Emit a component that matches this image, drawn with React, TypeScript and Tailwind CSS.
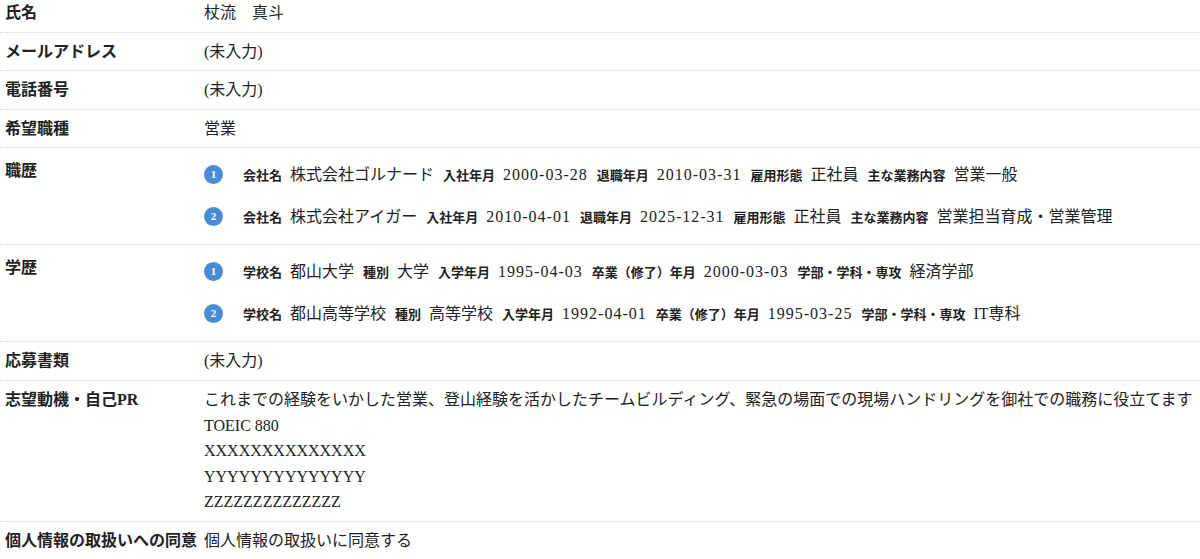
import React from "react";

type Field = { label: string; value: string };

const careers: Field[][] = [
  [
    { label: "会社名", value: "株式会社ゴルナード" },
    { label: "入社年月", value: "2000-03-28" },
    { label: "退職年月", value: "2010-03-31" },
    { label: "雇用形態", value: "正社員" },
    { label: "主な業務内容", value: "営業一般" },
  ],
  [
    { label: "会社名", value: "株式会社アイガー" },
    { label: "入社年月", value: "2010-04-01" },
    { label: "退職年月", value: "2025-12-31" },
    { label: "雇用形態", value: "正社員" },
    { label: "主な業務内容", value: "営業担当育成・営業管理" },
  ],
];

const schools: Field[][] = [
  [
    { label: "学校名", value: "都山大学" },
    { label: "種別", value: "大学" },
    { label: "入学年月", value: "1995-04-03" },
    { label: "卒業（修了）年月", value: "2000-03-03" },
    { label: "学部・学科・専攻", value: "経済学部" },
  ],
  [
    { label: "学校名", value: "都山高等学校" },
    { label: "種別", value: "高等学校" },
    { label: "入学年月", value: "1992-04-01" },
    { label: "卒業（修了）年月", value: "1995-03-25" },
    { label: "学部・学科・専攻", value: "IT専科" },
  ],
];

const isDate = (v: string) => /^\d{4}-\d{2}-\d{2}$/.test(v);

function Row({
  label,
  children,
  first,
  last,
}: {
  label: string;
  children: React.ReactNode;
  first?: boolean;
  last?: boolean;
}) {
  return (
    <div
      className={`grid grid-cols-[200px_1fr] ${
        last ? "" : "border-b border-dotted border-[#d4d4d4]"
      }`}
    >
      <div className={`pl-[5px] font-bold ${first ? "pb-[6px]" : "py-[6px]"}`}>
        {label}
      </div>
      <div className={`pl-1 ${first ? "pb-[6px]" : "py-[6px]"}`}>{children}</div>
    </div>
  );
}

function ListRow({ label, items }: { label: string; items: Field[][] }) {
  return (
    <div className="grid grid-cols-[200px_1fr] border-b border-dotted border-[#d4d4d4]">
      <div className="pl-[5px] pt-[10px] font-bold">{label}</div>
      <ol className="pl-1 pt-[5px] pb-[7px]">
        {items.map((fields, i) => (
          <li key={i} className="flex h-[42px] items-center">
            <span className="mr-[20px] flex h-[19px] w-[19px] shrink-0 items-center justify-center rounded-full bg-[#4a8bd6] text-[11px] font-bold leading-none text-white">
              {i + 1}
            </span>
            <span className="flex flex-wrap items-baseline gap-x-[9px]">
              {fields.map((f) => (
                <span key={f.label} className="flex items-baseline gap-x-[8px]">
                  <span className="text-[13px] font-bold">{f.label}</span>
                  <span className={isDate(f.value) ? "tracking-[1px]" : ""}>
                    {f.value}
                  </span>
                </span>
              ))}
            </span>
          </li>
        ))}
      </ol>
    </div>
  );
}

export default function App() {
  return (
    <div className="h-[559px] overflow-hidden bg-white font-['Liberation_Serif','Noto_Sans_CJK_JP',serif] text-base leading-[1.6] text-[#222]">
      <Row label="氏名" first>
        杖流　真斗
      </Row>
      <Row label="メールアドレス">(未入力)</Row>
      <Row label="電話番号">(未入力)</Row>
      <Row label="希望職種">営業</Row>
      <ListRow label="職歴" items={careers} />
      <ListRow label="学歴" items={schools} />
      <Row label="応募書類">(未入力)</Row>
      <Row label="志望動機・自己PR">
        <p>
          これまでの経験をいかした営業、登山経験を活かしたチームビルディング、緊急の場面での現場ハンドリングを御社での職務に役立てます
        </p>
        <p>TOEIC 880</p>
        <p>XXXXXXXXXXXXXX</p>
        <p>YYYYYYYYYYYYYY</p>
        <p>ZZZZZZZZZZZZZZ</p>
      </Row>
      <Row label="個人情報の取扱いへの同意" last>
        個人情報の取扱いに同意する
      </Row>
    </div>
  );
}
